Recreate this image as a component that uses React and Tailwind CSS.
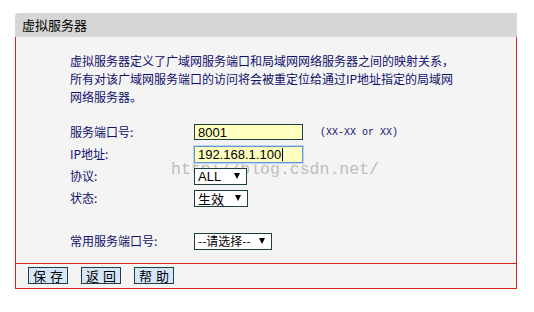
const cn = { fontFamily: '"Noto Sans CJK SC", "Liberation Sans", sans-serif' };
const arial = { fontFamily: '"Liberation Sans", Arial, sans-serif' };

const Row = ({ label, children }) => (
  <div className="relative z-10 flex h-[22px] items-center">
    <div className="w-[124px] text-[12px] text-[#10106e]">{label}</div>
    {children}
  </div>
);

const FakeSelect = ({ value, width, font }) => (
  <div
    className="flex h-[17px] items-center justify-between border border-[#1f3f3f] bg-white pl-[3px] pr-[6px] text-[13px] leading-none text-black"
    style={{ width, ...font }}
  >
    <span>{value}</span>
    <span className="h-0 w-0 border-x-[3.5px] border-t-[6px] border-x-transparent border-t-black" />
  </div>
);

const Button = ({ children }) => (
  <div className="flex h-[17px] w-[40px] items-center justify-center border border-[#1f3f3f] bg-[#d6e6fa] text-[13px] leading-none tracking-[4px] text-black">
    <span className="pl-[4px]">{children}</span>
  </div>
);

export default function App() {
  return (
    <div className="h-[312px] w-[534px] bg-white pl-[15px] pt-[13px]" style={cn}>
      <div className="w-[502px]">
        <div className="flex h-[24px] items-center rounded-tl-[4px] bg-[#d6d6d6] pl-[7px] text-[13px] text-black">
          虚拟服务器
        </div>

        <div className="relative border-x border-[#d9261c] bg-[#f4f4f4] pb-[11px] pl-[54px] pt-[15px]">
          <p className="text-[12px] leading-[18px] text-[#10106e]">
            虚拟服务器定义了广域网服务端口和局域网网络服务器之间的映射关系，
            <br />
            所有对该广域网服务端口的访问将会被重定位给通过IP地址指定的局域网
            <br />
            网络服务器。
          </p>

          <div
            className="pointer-events-none absolute left-[155px] top-[121px] z-0 text-[16.5px] text-[#bdbdbd]"
            style={{ fontFamily: '"Liberation Mono", monospace' }}
          >
            http://blog.csdn.net/
          </div>

          <div className="mt-[15px]">
            <Row label="服务端口号:">
              <div
                className="flex h-[16px] w-[109px] items-center border border-[#1f3f3f] bg-[#ffffc0] pl-[3px] text-[13px] leading-none text-black"
                style={arial}
              >
                8001
              </div>
              <span
                className="ml-[17px] text-[10px] text-[#10106e]"
                style={{ fontFamily: '"Liberation Mono", monospace' }}
              >
                (XX-XX or XX)
              </span>
            </Row>
            <Row label="IP地址:">
              <div
                className="flex h-[17px] w-[109px] items-center border border-[#5f9ad6] bg-[#ffffc0] pl-[3px] text-[13px] leading-none text-black shadow-[0_0_0_1px_#b9d3f0]"
                style={arial}
              >
                192.168.1.100
                <span className="ml-[1px] h-[13px] w-px bg-black" />
              </div>
            </Row>
            <Row label="协议:">
              <FakeSelect value="ALL" width={53} font={arial} />
            </Row>
            <Row label="状态:">
              <FakeSelect value="生效" width={54} />
            </Row>
          </div>

          <div className="mt-[21px]">
            <Row label="常用服务端口号:">
              <div className="text-[12px]">
                <FakeSelect value="--请选择--" width={78} font={{ fontSize: 12 }} />
              </div>
            </Row>
          </div>
        </div>

        <div className="flex h-[26px] gap-[13px] border border-[#d9261c] bg-[#f4f4f4] pl-[12px] pt-[3px]">
          <Button>保存</Button>
          <Button>返回</Button>
          <Button>帮助</Button>
        </div>
      </div>
    </div>
  );
}
